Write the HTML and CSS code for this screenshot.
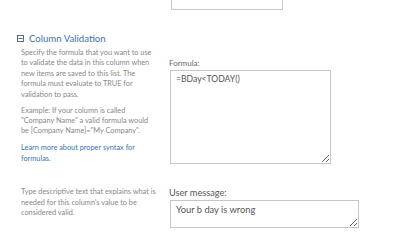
FILE: index.html
```html
<!DOCTYPE html>
<html>
<head>
  <title>Column Validation</title>
  <meta charset="UTF-8">
  <link rel="stylesheet" href="styles.css">
</head>
<body>
  <div class="prev-field"></div>

  <div class="section-title">
    <svg class="toggle" width="7" height="7" viewBox="0 0 7 7">
      <rect x="0.5" y="0.5" width="6" height="6" fill="none" stroke="#5a6b80" stroke-width="1"/>
      <line x1="1.5" y1="3.5" x2="5.5" y2="3.5" stroke="#5a6b80" stroke-width="1"/>
    </svg>
    <span>Column Validation</span>
  </div>

  <div class="row row-formula">
    <div class="desc">
      <p>Specify the formula that you want to use to validate the data in this column when new items are saved to this list. The formula must evaluate to TRUE for validation to pass.</p>
      <p class="gap">Example: If your column is called "Company Name" a valid formula would be [Company Name]="My Company".</p>
      <p class="gap-link"><a href="#">Learn more about proper syntax for formulas.</a></p>
    </div>
    <div class="field">
      <label class="label-small" for="formula">Formula:</label>
      <textarea id="formula" class="formula">=BDay&lt;TODAY()</textarea>
    </div>
  </div>

  <div class="row row-message">
    <div class="desc">
      <p>Type descriptive text that explains what is needed for this column's value to be considered valid.</p>
    </div>
    <div class="field">
      <label class="label-big" for="message">User message:</label>
      <textarea id="message" class="message">Your b day is wrong</textarea>
    </div>
  </div>
</body>
</html>
```

FILE: styles.css
```css
body { margin: 0; background: #fff; font-family: Lato, "Open Sans", sans-serif; color: #888; }
p { margin: 0; }

.prev-field { margin-left: 171px; width: 112px; height: 10px; box-sizing: border-box; border: 1px solid #c9c9c9; border-top: none; }

.section-title { display: flex; align-items: center; gap: 5px; margin-top: 22px; padding-left: 17px; height: 12px; font-size: 9.6px; color: #3b73af; }
.toggle { display: block; }

.row { display: grid; grid-template-columns: 169px 1fr; }
.desc { padding: 0 11.5px 0 21px; font-size: 7.35px; line-height: 10.4px; }
.gap { margin-top: 5.6px; }
.gap-link { margin-top: 6.5px; }
.desc a { color: #3a74b2; text-decoration: none; }

.row-formula { margin-top: 4px; }
.row-formula .field { padding-top: 10px; }
.row-message { margin-top: 21px; }
.row-message .desc { padding-top: 2px; }
.row-message .field { padding-top: 2px; }

.field { display: flex; flex-direction: column; align-items: flex-start; }
label { display: block; color: #555; }
.label-small { font-size: 8px; line-height: 10px; margin-bottom: 2px; color: #666; }
.label-big { font-size: 9.2px; line-height: 12px; margin-bottom: 1px; }

textarea { box-sizing: border-box; margin: 0 0 0 1px; border: 1px solid #c6c6c6; font-family: inherit; color: #555; padding: 3px 5px; background: #fff; }
.formula { width: 161px; height: 94px; font-size: 8.6px; line-height: 10px; }
.message { width: 189px; height: 28px; font-size: 9.3px; line-height: 12px; padding-top: 3px; }
```
